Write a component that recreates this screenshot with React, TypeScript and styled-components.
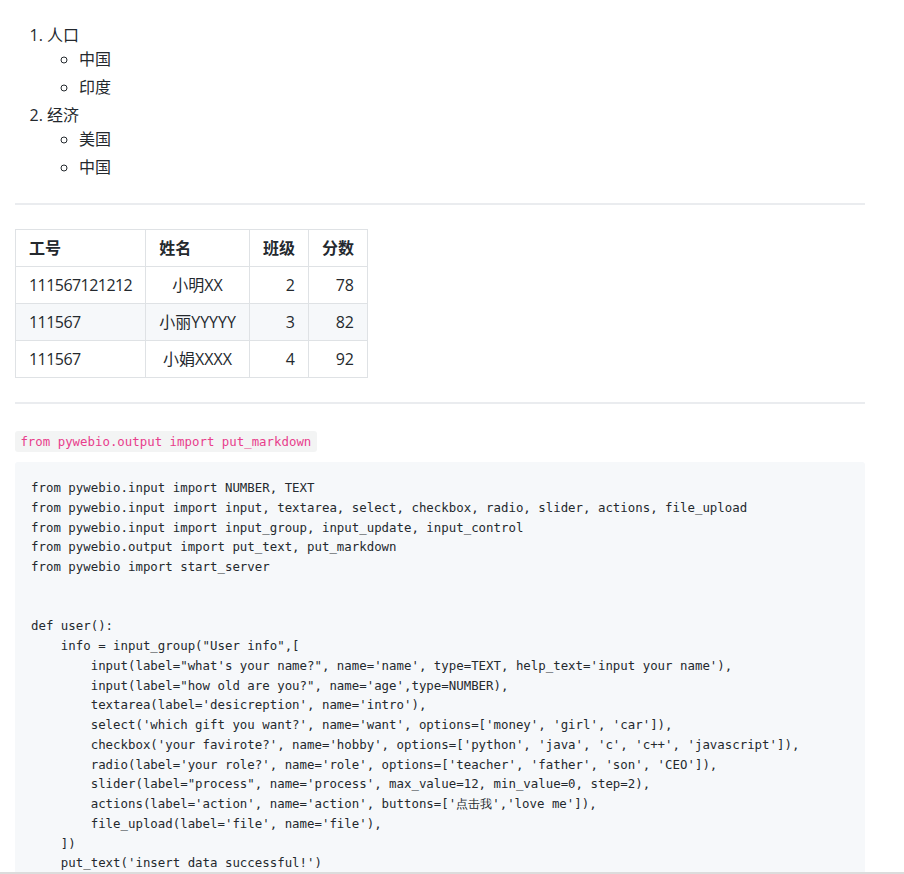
import styled, { createGlobalStyle } from 'styled-components';

const GlobalStyle = createGlobalStyle`
  html, body {
    margin: 0;
    padding: 0;
    background: #fff;
  }
  body {
    font-family: "Open Sans", "Noto Sans CJK SC", sans-serif;
    font-size: 16px;
    line-height: 1.5;
    color: #24292e;
  }
`;

const rows = [
  { id: '111567121212', name: '小明XX', grade: '2', score: '78' },
  { id: '111567', name: '小丽YYYYY', grade: '3', score: '82' },
  { id: '111567', name: '小娟XXXX', grade: '4', score: '92' },
];

const code = `from pywebio.input import NUMBER, TEXT
from pywebio.input import input, textarea, select, checkbox, radio, slider, actions, file_upload
from pywebio.input import input_group, input_update, input_control
from pywebio.output import put_text, put_markdown
from pywebio import start_server


def user():
    info = input_group("User info",[
        input(label="what's your name?", name='name', type=TEXT, help_text='input your name'),
        input(label="how old are you?", name='age',type=NUMBER),
        textarea(label='desicreption', name='intro'),
        select('which gift you want?', name='want', options=['money', 'girl', 'car']),
        checkbox('your favirote?', name='hobby', options=['python', 'java', 'c', 'c++', 'javascript']),
        radio(label='your role?', name='role', options=['teacher', 'father', 'son', 'CEO']),
        slider(label="process", name='process', max_value=12, min_value=0, step=2),
        actions(label='action', name='action', buttons=['点击我','love me']),
        file_upload(label='file', name='file'),
    ])
    put_text('insert data successful!')`;

const App = () => (
  <>
    <GlobalStyle />
    <MarkdownBody>
      <OrderedList>
        <li>
          人口
          <SubList>
            <li>中国</li>
            <li>印度</li>
          </SubList>
        </li>
        <li>
          经济
          <SubList>
            <li>美国</li>
            <li>中国</li>
          </SubList>
        </li>
      </OrderedList>

      <Rule />

      <Table>
        <thead>
          <tr>
            <HeadCell $align="left">工号</HeadCell>
            <HeadCell $align="left">姓名</HeadCell>
            <HeadCell $align="right">班级</HeadCell>
            <HeadCell $align="right">分数</HeadCell>
          </tr>
        </thead>
        <tbody>
          {rows.map((r, i) => (
            <BodyRow key={i}>
              <Cell $align="left" $narrow>{r.id}</Cell>
              <Cell $align="center">{r.name}</Cell>
              <Cell $align="right">{r.grade}</Cell>
              <Cell $align="right">{r.score}</Cell>
            </BodyRow>
          ))}
        </tbody>
      </Table>

      <Rule />

      <Paragraph>
        <InlineCode>from pywebio.output import put_markdown</InlineCode>
      </Paragraph>

      <CodeBlock>
        <code>{code}</code>
      </CodeBlock>
    </MarkdownBody>
    <BottomEdge />
  </>
);

export default App;

const MarkdownBody = styled.div`
  width: 850px;
  margin-left: 15px;
  padding-top: 23px;
`;

const OrderedList = styled.ol`
  margin: 0;
  padding-left: 32px;

  & > li + li {
    margin-top: 4px;
  }
`;

const SubList = styled.ul`
  margin: 0;
  padding-left: 32px;
  list-style-type: circle;

  & > li + li {
    margin-top: 4px;
  }
`;

const Rule = styled.hr`
  height: 2px;
  margin: 24px 0;
  padding: 0;
  border: 0;
  background: #eaecef;
`;

const Table = styled.table`
  border-collapse: collapse;
  border-spacing: 0;
  margin: 0;
`;

const HeadCell = styled.th<{ $align: string }>`
  padding: 6px 13px;
  border: 1px solid #dfe2e5;
  font-weight: 700;
  text-align: ${({ $align }) => $align};
`;

const BodyRow = styled.tr`
  background: #fff;

  &:nth-child(2n) {
    background: #f6f8fa;
  }
`;

const Cell = styled.td<{ $align: string; $narrow?: boolean }>`
  padding: 6px 13px;
  border: 1px solid #dfe2e5;
  text-align: ${({ $align }) => $align};
  letter-spacing: ${({ $narrow }) => ($narrow ? '-0.55px' : 'normal')};
`;

const Paragraph = styled.p`
  margin: 0 0 8px;
  line-height: 25px;
`;

const InlineCode = styled.code`
  padding: 3px 5.4px;
  border-radius: 3px;
  background: rgba(27, 31, 35, 0.05);
  color: #e83e8c;
  font-family: "DejaVu Sans Mono", "Noto Sans CJK SC", monospace;
  font-size: 12.4px;
`;

const CodeBlock = styled.pre`
  margin: 0;
  padding: 16px;
  border-radius: 3px;
  background: #f6f8fa;
  color: #24292e;
  font-family: "DejaVu Sans Mono", "Noto Sans CJK SC", monospace;
  font-size: 12.4px;
  line-height: 19.75px;
  white-space: pre;
`;

const BottomEdge = styled.div`
  position: fixed;
  left: 0;
  right: 0;
  bottom: 0;
  height: 2px;
  background: #dcdcdc;
`;
